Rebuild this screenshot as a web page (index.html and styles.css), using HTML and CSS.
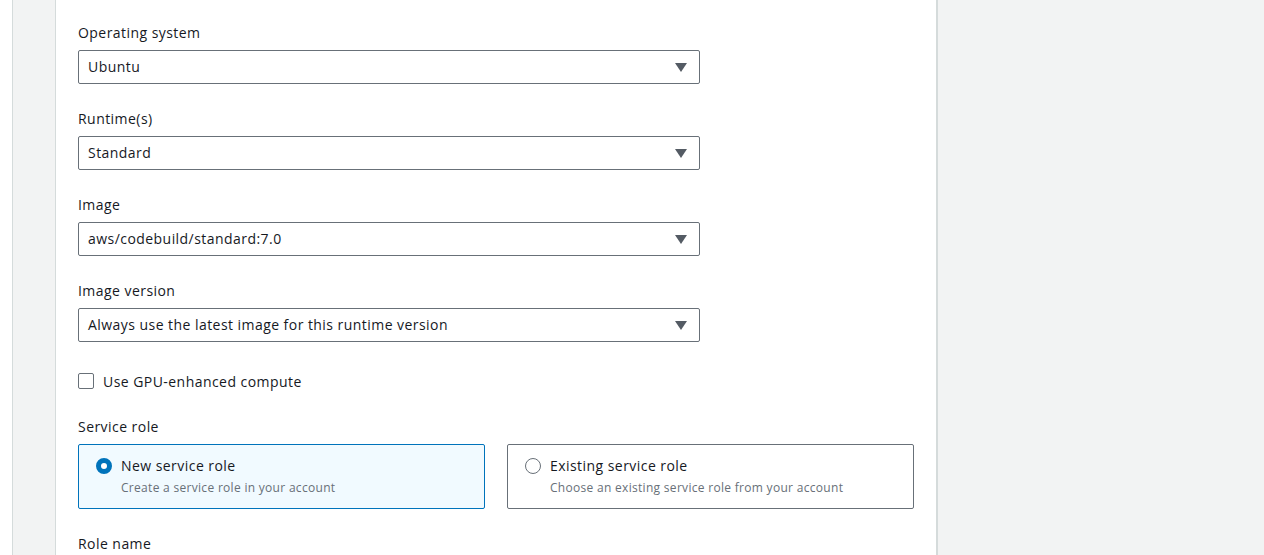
FILE: index.html
```html
<!DOCTYPE html>
<html>
<head>
<meta charset="utf-8">
<link rel="stylesheet" href="styles.css">
</head>
<body>
<div class="page">
  <div class="nav"></div>
  <div class="gutter"></div>
  <div class="card">
    <div class="field">
      <div class="label">Operating system</div>
      <div class="select"><span>Ubuntu</span><span class="caret"></span></div>
    </div>
    <div class="field">
      <div class="label">Runtime(s)</div>
      <div class="select"><span>Standard</span><span class="caret"></span></div>
    </div>
    <div class="field">
      <div class="label">Image</div>
      <div class="select"><span>aws/codebuild/standard:7.0</span><span class="caret"></span></div>
    </div>
    <div class="field">
      <div class="label">Image version</div>
      <div class="select"><span>Always use the latest image for this runtime version</span><span class="caret"></span></div>
    </div>
    <label class="check"><span class="box"></span><span>Use GPU-enhanced compute</span></label>
    <div class="field role">
      <div class="label">Service role</div>
      <div class="tiles">
        <div class="tile active">
          <span class="radio on"></span>
          <div class="tile-text">
            <div class="tile-title">New service role</div>
            <div class="tile-desc">Create a service role in your account</div>
          </div>
        </div>
        <div class="tile">
          <span class="radio"></span>
          <div class="tile-text">
            <div class="tile-title">Existing service role</div>
            <div class="tile-desc">Choose an existing service role from your account</div>
          </div>
        </div>
      </div>
    </div>
    <div class="label rolename">Role name</div>
  </div>
  <div class="side"></div>
</div>
</body>
</html>
```
FILE: styles.css
```css
html, body {
  margin: 0;
  padding: 0;
  height: 100%;
  overflow: hidden;
}
body {
  font-family: "Open Sans", "Noto Sans", sans-serif;
  font-size: 14px;
  letter-spacing: 0.45px;
  color: #16191f;
  background: #f2f3f3;
}
.page {
  display: flex;
  height: 555px;
}
.nav {
  width: 12px;
  background: #ffffff;
  border-right: 1px solid #d5dbdb;
  flex: none;
}
.gutter {
  width: 42px;
  background: #f2f3f3;
  border-right: 1px solid #d5dbdb;
  flex: none;
}
.card {
  width: 836px;
  flex: none;
  background: #ffffff;
  border-right: 2px solid #d5dbdb;
  padding: 22px 22px 0 22px;
  box-sizing: content-box;
}
.side {
  flex: 1;
  background: #f2f3f3;
}
.field {
  margin-bottom: 24px;
}
.label {
  line-height: 22px;
  margin-bottom: 6px;
  color: #16191f;
}
.select {
  width: 622px;
  height: 34px;
  box-sizing: border-box;
  border: 1px solid #687078;
  border-radius: 2px;
  display: flex;
  align-items: center;
  justify-content: space-between;
  padding: 0 12px 0 9px;
  line-height: 22px;
}
.caret {
  width: 0;
  height: 0;
  border-left: 6px solid transparent;
  border-right: 6px solid transparent;
  border-top: 9px solid #545b64;
  margin-top: 1px;
}
.check {
  display: flex;
  align-items: center;
  gap: 9px;
  height: 22px;
  margin-top: 28px;
  margin-bottom: 24px;
}
.box {
  width: 14px;
  height: 14px;
  border: 1px solid #687078;
  border-radius: 2px;
  background: #fff;
}
.role .label {
  margin-bottom: 6px;
}
.tiles {
  display: flex;
  gap: 22px;
}
.tile {
  width: 407px;
  height: 65px;
  box-sizing: border-box;
  border: 1px solid #687078;
  border-radius: 2px;
  display: flex;
  align-items: flex-start;
  padding: 10px 17px;
  gap: 9px;
}
.tile.active {
  border-color: #0073bb;
  background: #f1faff;
}
.radio {
  width: 14px;
  height: 14px;
  border: 1px solid #687078;
  border-radius: 50%;
  margin-top: 3px;
  flex: none;
  background: #fff;
}
.radio.on {
  width: 6px;
  height: 6px;
  border: 5px solid #0073bb;
}
.tile-title {
  line-height: 22px;
}
.tile-desc {
  font-size: 12px;
  letter-spacing: 0.3px;
  line-height: 20px;
  margin-top: 1px;
  color: #687078;
}
.rolename {
  margin-top: 18px;
}
```
